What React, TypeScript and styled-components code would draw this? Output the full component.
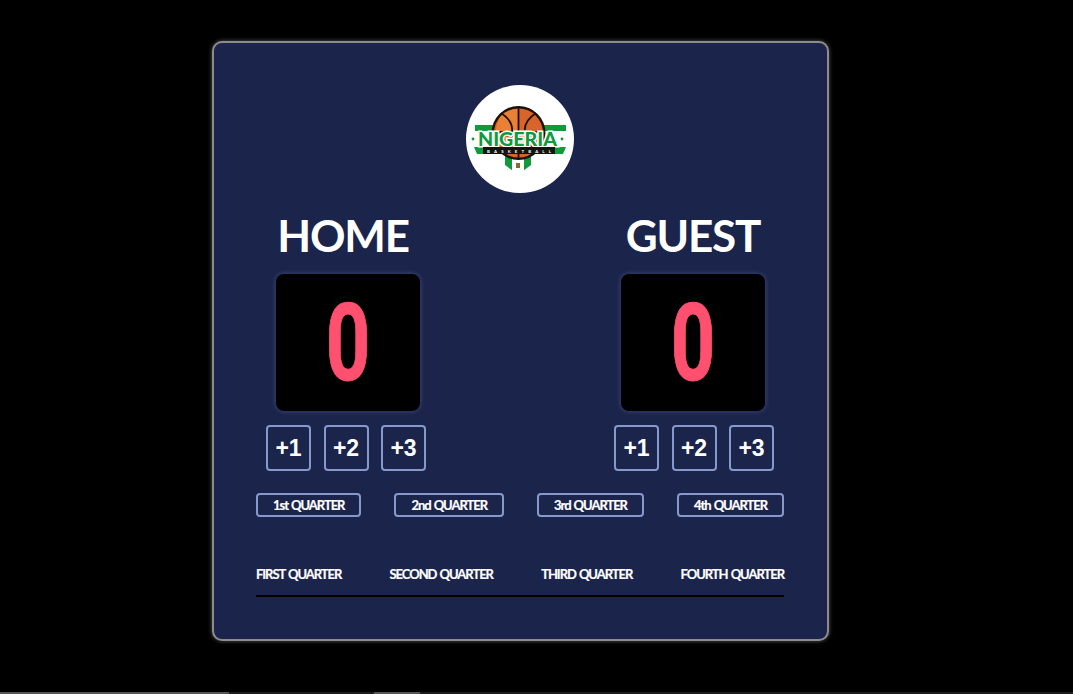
import styled, { createGlobalStyle } from "styled-components";

const GlobalStyle = createGlobalStyle`
  html, body {
    margin: 0;
    padding: 0;
    background: #000;
    height: 100%;
    overflow: hidden;
  }
  body {
    font-family: Lato, "Liberation Sans", sans-serif;
  }
`;

const Page = styled.div`
  height: 694px;
  padding: 41px 0 0 212px;
  box-sizing: border-box;
  display: flex;
  position: relative;
`;

const Board = styled.main`
  box-sizing: border-box;
  width: 617px;
  height: 600px;
  background: #1b244a;
  border: 2px solid #8c8c8c;
  border-radius: 10px;
  box-shadow: 0 0 4px rgba(255, 255, 255, 0.35);
  padding: 42px 43px 0 42px;
  display: flex;
  flex-direction: column;
  align-items: center;
`;

const LogoBadge = styled.div`
  width: 108px;
  height: 108px;
  flex-shrink: 0;
`;

const Teams = styled.div`
  width: 100%;
  box-sizing: border-box;
  padding: 0 5px;
  display: flex;
  justify-content: space-between;
  margin-top: 15px;
`;

const Team = styled.section`
  width: 170px;
  display: flex;
  flex-direction: column;
  align-items: center;
`;

const TeamName = styled.h2<{ $shift: number }>`
  margin: 0 0 0 ${(p) => p.$shift}px;
  font-size: 44px;
  line-height: 54px;
  font-weight: 700;
  color: #fff;
  letter-spacing: -1.2px;
`;

const ScoreBox = styled.div<{ $shift: number }>`
  width: 144px;
  height: 137px;
  margin: 12px 0 0 ${(p) => p.$shift}px;
  background: #000;
  border-radius: 8px;
  box-shadow: 0 0 0 1px #2a3360, 0 0 4px 1px #39436f;
  display: flex;
  align-items: center;
  justify-content: center;
`;

const ScoreValue = styled.span`
  display: block;
  color: #ff5070;
  font-family: Roboto, sans-serif;
  font-size: 108px;
  line-height: 1;
  font-weight: 700;
  transform: scaleX(0.72);
  -webkit-text-stroke: 1px #ff5070;
`;

const Points = styled.div`
  display: flex;
  gap: 12.5px;
  margin-top: 14px;
`;

const PointButton = styled.button`
  box-sizing: border-box;
  width: 45px;
  height: 46px;
  padding: 1px 0 0;
  background: transparent;
  border: 2px solid #8798cc;
  border-radius: 4px;
  color: #fff;
  font-family: "Liberation Sans", sans-serif;
  font-size: 23px;
  font-weight: 700;
`;

const QuarterButtons = styled.div`
  width: 528px;
  display: flex;
  justify-content: space-between;
  margin-top: 22px;
`;

const QuarterButton = styled.button`
  box-sizing: border-box;
  height: 24px;
  padding: 0 15px;
  background: transparent;
  border: 2px solid #8798cc;
  border-radius: 4px;
  color: #fff;
  font-family: Lato, sans-serif;
  font-size: 13px;
  font-weight: 700;
  letter-spacing: -1.05px;
  word-spacing: 1px;
  -webkit-text-stroke: 0.2px #fff;
`;

const QuarterLabels = styled.div`
  width: 528px;
  display: flex;
  justify-content: space-between;
  margin-top: 49px;
  padding-bottom: 13px;
  border-bottom: 2px solid #000;
`;

const QuarterLabel = styled.span`
  color: #fff;
  font-size: 13px;
  line-height: 16px;
  font-weight: 700;
  letter-spacing: -1.05px;
  word-spacing: 1px;
  -webkit-text-stroke: 0.2px #fff;
`;

const ScrollTrack = styled.div`
  position: absolute;
  left: 0;
  right: 0;
  bottom: 0;
  height: 2px;
  background: #1c1c1c;
  display: flex;
`;

const ScrollThumb = styled.div`
  width: 229px;
  background: #555;
`;

const ScrollMark = styled.div`
  width: 46px;
  margin-left: 145px;
  background: #555;
`;

const NigeriaLogo = () => (
  <svg width="108" height="108" viewBox="0 0 108 108">
    <circle cx="54" cy="54" r="54" fill="#fff" />
    {/* green bands behind the ball */}
    <path d="M9 40h91v6H9z" fill="#109a3b" />
    <path d="M8 62h10l4 7H11zM100 62H88l-4 7h13z" fill="#109a3b" />
    {/* shield under the banner */}
    <path d="M39 70h26v10l-8 6H47l-8-6z" fill="#109a3b" />
    <path d="M46 70h12v16H46z" fill="#fff" />
    <path d="M50 78h4v5h-4z" fill="#8a6a2a" />
    {/* ball */}
    <circle cx="52.5" cy="48" r="27" fill="#1a1108" />
    <circle cx="52.5" cy="48" r="24.5" fill="#d9642a" />
    <path d="M34 32a25 25 0 0 1 18-8v24H30c0-6 1-11 4-16z" fill="#ef8b3c" opacity="0.7" />
    <path
      d="M52.5 21v54M26 47h53M35 28c9 6 12 13 11 19M70 28c-9 6-12 13-11 19M33 68c8-5 12-12 13-20M72 68c-8-5-12-12-13-20"
      fill="none"
      stroke="#1a1108"
      strokeWidth="1.8"
    />
    {/* wordmark */}
    <text
      x="51.5"
      y="60.5"
      textAnchor="middle"
      textLength="79"
      lengthAdjust="spacingAndGlyphs"
      fontFamily="Lato, sans-serif"
      fontSize="18"
      fontWeight="900"
      fill="#109a3b"
      stroke="#fff"
      strokeWidth="3"
      paintOrder="stroke"
    >
      NIGERIA
    </text>
    <circle cx="7" cy="54" r="1.4" fill="#109a3b" />
    <circle cx="96" cy="54" r="1.4" fill="#109a3b" />
    <path d="M17 62h72v7H17z" fill="#14140f" />
    <text
      x="53"
      y="68.4"
      textAnchor="middle"
      textLength="64"
      fontFamily="Lato, sans-serif"
      fontSize="4.4"
      fontWeight="700"
      fill="#fff"
    >
      BASKETBALL
    </text>
  </svg>
);

const teams = [
  { name: "HOME", nameShift: -6, boxShift: 4 },
  { name: "GUEST", nameShift: -2, boxShift: -3 },
];

const App = () => {
  return (
    <>
      <GlobalStyle />
      <Page>
        <Board>
          <LogoBadge>
            <NigeriaLogo />
          </LogoBadge>
          <Teams>
            {teams.map((t) => (
              <Team key={t.name}>
                <TeamName $shift={t.nameShift}>{t.name}</TeamName>
                <ScoreBox $shift={t.boxShift}>
                  <ScoreValue>0</ScoreValue>
                </ScoreBox>
                <Points>
                  <PointButton>+1</PointButton>
                  <PointButton>+2</PointButton>
                  <PointButton>+3</PointButton>
                </Points>
              </Team>
            ))}
          </Teams>
          <QuarterButtons>
            <QuarterButton>1st QUARTER</QuarterButton>
            <QuarterButton>2nd QUARTER</QuarterButton>
            <QuarterButton>3rd QUARTER</QuarterButton>
            <QuarterButton>4th QUARTER</QuarterButton>
          </QuarterButtons>
          <QuarterLabels>
            <QuarterLabel>FIRST QUARTER</QuarterLabel>
            <QuarterLabel>SECOND QUARTER</QuarterLabel>
            <QuarterLabel>THIRD QUARTER</QuarterLabel>
            <QuarterLabel>FOURTH QUARTER</QuarterLabel>
          </QuarterLabels>
        </Board>
        <ScrollTrack>
          <ScrollThumb />
          <ScrollMark />
        </ScrollTrack>
      </Page>
    </>
  );
};

export default App;
